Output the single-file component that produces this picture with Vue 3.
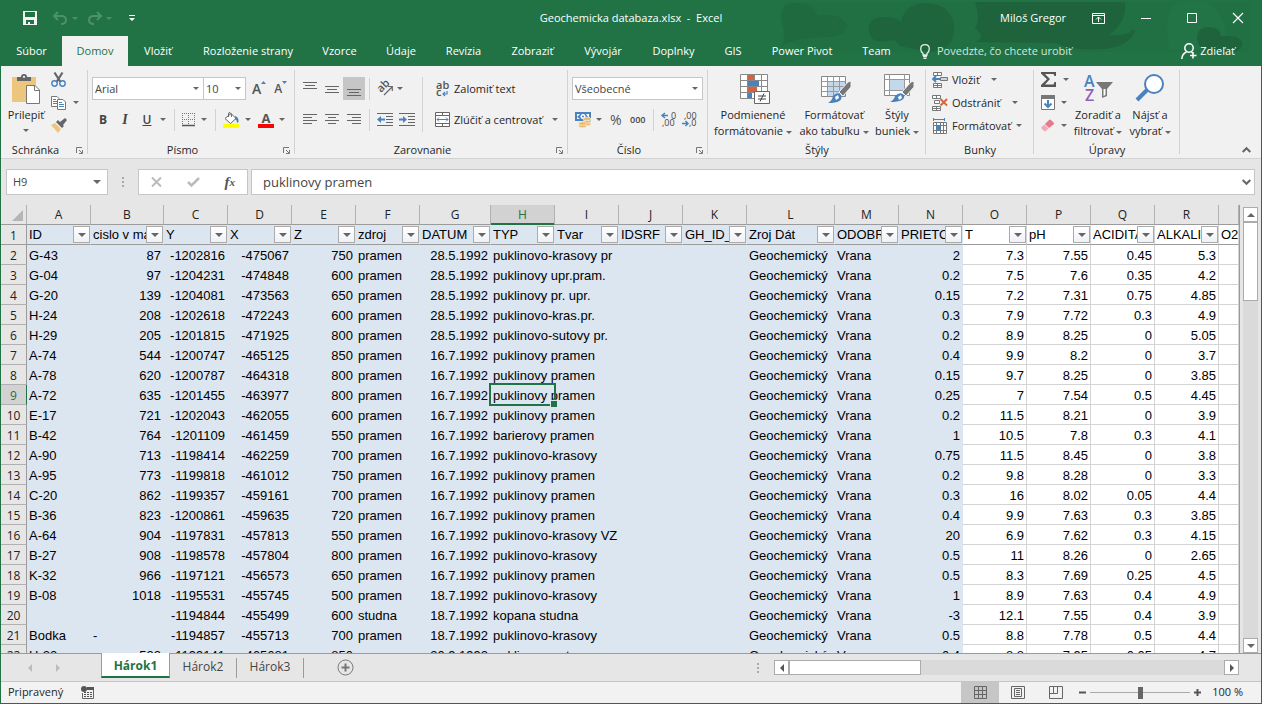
<script setup>
import { ref } from 'vue'

const menuTabs = ['Súbor', 'Domov', 'Vložiť', 'Rozloženie strany', 'Vzorce', 'Údaje', 'Revízia', 'Zobraziť', 'Vývojár', 'Doplnky', 'GIS', 'Power Pivot', 'Team']
const activeTab = ref('Domov')
const formula = ref('puklinovy pramen')
const zoom = ref(50)

const columns = [...'ABCDEFGHIJKLMNOPQR', '']
const headings = ['ID', 'cislo v mape', 'Y', 'X', 'Z', 'zdroj', 'DATUM', 'TYP', 'Tvar', 'IDSRF', 'GH_ID_', 'Zroj Dát', 'ODOBRAL', 'PRIETOK', 'T', 'pH', 'ACIDITA', 'ALKALITA', 'O2']
const source = [
  ['G-43', '87', '-1202816', '-475067', '750', 'pramen', '28.5.1992', 'puklinovo-krasovy pr', '2', '7.3', '7.55', '0.45', '5.3'],
  ['G-04', '97', '-1204231', '-474848', '600', 'pramen', '28.5.1992', 'puklinovy upr.pram.', '0.2', '7.5', '7.6', '0.35', '4.2'],
  ['G-20', '139', '-1204081', '-473563', '650', 'pramen', '28.5.1992', 'puklinovy pr. upr.', '0.15', '7.2', '7.31', '0.75', '4.85'],
  ['H-24', '208', '-1202618', '-472243', '600', 'pramen', '28.5.1992', 'puklinovo-kras.pr.', '0.3', '7.9', '7.72', '0.3', '4.9'],
  ['H-29', '205', '-1201815', '-471925', '800', 'pramen', '28.5.1992', 'puklinovo-sutovy pr.', '0.2', '8.9', '8.25', '0', '5.05'],
  ['A-74', '544', '-1200747', '-465125', '850', 'pramen', '16.7.1992', 'puklinovy pramen', '0.4', '9.9', '8.2', '0', '3.7'],
  ['A-78', '620', '-1200787', '-464318', '800', 'pramen', '16.7.1992', 'puklinovy pramen', '0.15', '9.7', '8.25', '0', '3.85'],
  ['A-72', '635', '-1201455', '-463977', '800', 'pramen', '16.7.1992', 'puklinovy pramen', '0.25', '7', '7.54', '0.5', '4.45'],
  ['E-17', '721', '-1202043', '-462055', '600', 'pramen', '16.7.1992', 'puklinovy pramen', '0.2', '11.5', '8.21', '0', '3.9'],
  ['B-42', '764', '-1201109', '-461459', '550', 'pramen', '16.7.1992', 'barierovy pramen', '1', '10.5', '7.8', '0.3', '4.1'],
  ['A-90', '713', '-1198414', '-462259', '700', 'pramen', '16.7.1992', 'puklinovo-krasovy', '0.75', '11.5', '8.45', '0', '3.8'],
  ['A-95', '773', '-1199818', '-461012', '750', 'pramen', '16.7.1992', 'puklinovy pramen', '0.2', '9.8', '8.28', '0', '3.3'],
  ['C-20', '862', '-1199357', '-459161', '700', 'pramen', '16.7.1992', 'puklinovy pramen', '0.3', '16', '8.02', '0.05', '4.4'],
  ['B-36', '823', '-1200861', '-459635', '720', 'pramen', '16.7.1992', 'puklinovy pramen', '0.4', '9.9', '7.63', '0.3', '3.85'],
  ['A-64', '904', '-1197831', '-457813', '550', 'pramen', '16.7.1992', 'puklinovo-krasovy VZ', '20', '6.9', '7.62', '0.3', '4.15'],
  ['B-27', '908', '-1198578', '-457804', '800', 'pramen', '16.7.1992', 'puklinovo-krasovy', '0.5', '11', '8.26', '0', '2.65'],
  ['K-32', '966', '-1197121', '-456573', '650', 'pramen', '16.7.1992', 'puklinovy pramen', '0.5', '8.3', '7.69', '0.25', '4.5'],
  ['B-08', '1018', '-1195531', '-455745', '500', 'pramen', '18.7.1992', 'puklinovo-krasovy', '1', '8.9', '7.63', '0.4', '4.9'],
  ['', '', '-1194844', '-455499', '600', 'studna', '18.7.1992', 'kopana studna', '-3', '12.1', '7.55', '0.4', '3.9'],
  ['Bodka', '-', '-1194857', '-455713', '700', 'pramen', '18.7.1992', 'puklinovo-krasovy', '0.5', '8.8', '7.78', '0.5', '4.4'],
  ['H-22', '532', '-1199141', '-465681', '850', 'pramen', '20.9.1992', 'puklinovo-sutovy', '0.4', '8.8', '7.95', '0.05', '4.7']
]
const rows = source.map((r) => [...r.slice(0, 8), '', '', '', 'Geochemický', 'Vrana', ...r.slice(8), ''])

const textColumns = [0, 5, 7, 11, 12]
function cellClass(value, c, r) {
  return {
    num: !textColumns.includes(c) && value !== '-',
    plain: c > 13,
    selected: c === 7 && r === 7
  }
}
</script>

<template>
  <div class="window">
    <header class="top">
      <svg class="pattern" width="482" height="56" viewBox="0 0 482 56" aria-hidden="true">
        <g fill="#1e633c">
          <path opacity=".45" d="M5 2H470V52H30Q10 45 8 30Z" fill="#1f6c41" />
          <path opacity=".5" d="M2 20Q0 3 18 3Q36 3 38 16Q62 12 68 26Q66 38 42 37Q14 38 2 47Q8 37 2 20Z" />
          <path opacity=".8" d="M90 32Q88 17 105 17Q118 17 122 22Q126 3 148 3Q176 5 175 32Q172 52 150 52L120 46Q118 38 108 41Q92 44 90 32Z" />
          <path d="M196 2H346Q348 22 330 35Q352 36 352 30H356Q352 46 325 49Q290 51 278 43L196 42Q208 38 196 28Q202 20 196 2Z" />
          <path opacity=".2" fill="#2d8050" d="M388 25Q390 2 404 2H428Q452 20 446 50H390Z" />
          <path d="M418 38Q418 27 431 27Q442 28 442 36Q460 34 463 43Q464 52 448 52H428Q419 48 418 38Z" />
        </g>
      </svg>
      <div class="titlebar">
        <div class="quick">
          <button class="tb" aria-label="Uložiť"><svg width="14" height="14" viewBox="0 0 14 14"><path fill="#f4f4f4" fill-rule="evenodd" d="M0 0H14V14H0ZM2 1V6H12V1ZM3 9V13H5V11H7V13H11V9Z" /></svg></button>
          <button class="tb" aria-label="Späť"><svg width="15" height="13" viewBox="0 0 15 13" fill="none" stroke="#4d916b" stroke-width="2"><path d="M5 0L1 4L5 8M1 4H8Q13 4 13 8Q13 12 8 12" /></svg></button>
          <span class="caret dim"></span>
          <button class="tb redo" aria-label="Znova"><svg width="15" height="13" viewBox="0 0 15 13" fill="none" stroke="#4d916b" stroke-width="2"><path d="M10 0L14 4L10 8M14 4H7Q2 4 2 8Q2 12 7 12" /></svg></button>
          <span class="caret dim"></span>
          <button class="tb more" aria-label="Prispôsobiť"><svg width="6" height="6" viewBox="0 0 6 6" fill="#fff"><path d="M0 0H6V1H0ZM0 3H6L3 6Z" /></svg></button>
        </div>
        <div class="title">Geochemicka databaza.xlsx&nbsp; -&nbsp; Excel</div>
        <div class="system">
          <span>Miloš Gregor</span>
          <button class="tb" aria-label="Zobrazenie pása s nástrojmi"><svg width="13" height="11" viewBox="0 0 13 11" fill="none" stroke="#fff"><path d="M.5.5H12.5V10.5H.5ZM1 2.500H12M6.500 9V4M4 6.500L6.500 4L9 6.500" /></svg></button>
          <button class="tb" aria-label="Minimalizovať"><svg width="10" height="10" viewBox="0 0 10 10" stroke="#fff"><path d="M0 5.500H10" /></svg></button>
          <button class="tb" aria-label="Maximalizovať"><svg width="10" height="10" viewBox="0 0 10 10" stroke="#fff" fill="none"><path d="M.5.5H9.500V9.500H.5Z" /></svg></button>
          <button class="tb" aria-label="Zavrieť"><svg width="10" height="10" viewBox="0 0 10 10" stroke="#fff" stroke-width="1.200"><path d="M0 0L10 10M10 0L0 10" /></svg></button>
        </div>
      </div>
      <div class="menubar">
        <nav class="menu">
          <button v-for="t in menuTabs" :key="t" :class="{ on: t === activeTab }" @click="activeTab = t">{{ t }}</button>
        </nav>
        <button class="tell"><svg width="10" height="15" viewBox="0 0 10 15" fill="none" stroke="#e3efe8" stroke-width="1.300"><path d="M3 11V9.500Q.7 7.500.7 5Q.7.700 5 .7Q9.300.700 9.300 5Q9.300 7.500 7 9.500V11ZM3 12.500H7M3.500 14.300H6.500" /></svg>Povedzte, čo chcete urobiť</button>
        <button class="share"><svg width="16" height="16" viewBox="0 0 16 16" fill="none" stroke="#fff" stroke-width="1.500"><circle cx="8" cy="5" r="4.200" /><path d="M.8 16Q1 11 5.500 9M10.500 9L11.500 10M12 9V15.500M9 12.500H15.500" /></svg>Zdieľať</button>
      </div>
    </header>

    <section class="ribbon">
      <div class="group g-clip">
        <div class="body">
          <button class="big paste">
            <svg width="28" height="30" viewBox="0 0 28 30"><path fill="#ecc57e" d="M0 3H24V28H0Z" /><path fill="#666" fill-rule="evenodd" d="M5 7V3H9Q9 0 12 0Q15 0 15 3H19V7ZM11 2V4H13V2Z" /><path fill="#fff" stroke="#777" d="M14.500 11.500H23L27.500 16V29.500H14.500Z" /><path fill="none" stroke="#777" d="M22.500 11.500V16.500H27.500" /></svg>
            <span>Prilepiť</span><i class="caret"></i>
          </button>
          <div class="stack clipstack">
            <button aria-label="Vystrihnúť"><svg width="15" height="15" viewBox="0 0 15 15" fill="none"><path stroke="#666" stroke-width="2.200" d="M3.500.5L9.500 10M11.500.5L5.500 10" /><circle cx="3.500" cy="11.500" r="2.700" stroke="#4a82bd" stroke-width="1.400" /><circle cx="11.500" cy="11.500" r="2.700" stroke="#4a82bd" stroke-width="1.400" /></svg></button>
            <button aria-label="Kopírovať"><svg width="15" height="14" viewBox="0 0 15 14"><path fill="#fff" stroke="#777" d="M.5.500H6L8.500 3V10.500H.5Z" /><path stroke="#4a82bd" d="M2 3.500H5M2 5.500H6M2 7.500H6" /><path fill="#fff" stroke="#777" d="M6.500 3.500H12L14.500 6V13.500H6.500Z" /><path stroke="#4a82bd" d="M8 6.500H11M8 8.500H13M8 10.500H13" /></svg><i class="caret"></i></button>
            <button aria-label="Kopírovať formát"><svg width="16" height="15" viewBox="0 0 16 15"><path fill="#ecc57e" d="M0 7L4 5L10 11L7 15Z" /><path fill="#666" d="M5 4L7 2L13 8L11 10ZM9 4L14 0L16 2L12 7Z" /></svg></button>
          </div>
        </div>
        <div class="glabel">Schránka<svg class="launch" width="7" height="7" viewBox="0 0 7 7"><path fill="none" stroke="#777" d="M.5 6V.5H6M3 3L6 6M6.500 3V6.500H3" /></svg></div>
      </div>

      <div class="group g-font">
        <div class="body rows">
          <div class="row">
            <label class="combo font"><select aria-label="Písmo"><option>Arial</option></select><i class="caret"></i></label>
            <label class="combo size"><select aria-label="Veľkosť písma"><option>10</option></select><i class="caret"></i></label>
            <button class="grow" aria-label="Zväčšiť písmo"><b>A</b><svg width="5" height="3" viewBox="0 0 5 3"><path fill="#4a82bd" d="M0 3L2.500 0L5 3Z" /></svg></button>
            <button class="grow small" aria-label="Zmenšiť písmo"><b>A</b><svg width="5" height="3" viewBox="0 0 5 3"><path fill="#4a82bd" d="M0 0H5L2.500 3Z" /></svg></button>
          </div>
          <div class="row biu">
            <button class="fmt"><b>B</b></button>
            <button class="fmt"><em>I</em></button>
            <button class="fmt"><u>U</u></button><i class="caret"></i>
            <span class="vsep"></span>
            <button aria-label="Orámovanie"><svg width="14" height="14" viewBox="0 0 14 14" fill="none" stroke="#777"><path stroke-dasharray="1 1" d="M0 .5H13M.5 0V12M12.500 0V12M6.500 0V12M0 6.500H13" /><path d="M0 12.500H13" stroke="#555" stroke-width="1.500" /></svg></button><i class="caret"></i>
            <span class="vsep"></span>
            <button aria-label="Farba výplne"><svg width="17" height="16" viewBox="0 0 17 16"><path fill="#fff" stroke="#666" d="M2 6.500L8 1.500L13 6.500L7.500 11.500Z" /><path fill="none" stroke="#666" d="M5.500 5V2Q5.500.5 7 .5Q8.500.5 8.500 5" /><path fill="#4a82bd" d="M12 4Q16 5 15.500 10L14 11Q14 8 12 7Z" /><path fill="#ff0" d="M0 12H16V16H0Z" /></svg></button><i class="caret"></i>
            <button class="color"><b>A</b></button><i class="caret"></i>
          </div>
        </div>
        <div class="glabel">Písmo<svg class="launch" width="7" height="7" viewBox="0 0 7 7"><path fill="none" stroke="#777" d="M.5 6V.5H6M3 3L6 6M6.500 3V6.500H3" /></svg></div>
      </div>

      <div class="group g-align">
        <div class="body alignbody">
          <div class="alignleft">
            <div class="row">
              <button class="al" aria-label="Hore"><svg width="14" height="14" viewBox="0 0 14 14" stroke="#666"><path d="M0 .5H14M2 3.500H12M0 6.500H14" /></svg></button>
              <button class="al" aria-label="Stred"><svg width="14" height="14" viewBox="0 0 14 14" stroke="#666"><path d="M0 4.500H14M2 7.500H12M0 10.500H14" /></svg></button>
              <button class="al pressed" aria-label="Dole"><svg width="14" height="14" viewBox="0 0 14 14" stroke="#666"><path d="M0 7.500H14M2 10.500H12M0 13.500H14" /></svg></button>
              <span class="vsep"></span>
              <button class="orient" aria-label="Orientácia"><svg width="16" height="16" viewBox="0 0 16 16"><text transform="translate(4 12) rotate(-45)" font-size="11" font-family="Open Sans" font-weight="600" fill="#555">ab</text><path fill="none" stroke="#666" stroke-width="1.200" d="M7 14L15 6M11 5.500H15.300V10" /></svg><i class="caret"></i></button>
            </div>
            <div class="row">
              <button class="al" aria-label="Vľavo"><svg width="14" height="11" viewBox="0 0 14 11" stroke="#666"><path d="M0 .5H14M0 3.500H9M0 6.500H14M0 9.500H9" /></svg></button>
              <button class="al" aria-label="Centrovať"><svg width="14" height="11" viewBox="0 0 14 11" stroke="#666"><path d="M0 .5H14M3 3.500H11M0 6.500H14M3 9.500H11" /></svg></button>
              <button class="al" aria-label="Vpravo"><svg width="14" height="11" viewBox="0 0 14 11" stroke="#666"><path d="M0 .5H14M5 3.500H14M0 6.500H14M5 9.500H14" /></svg></button>
              <span class="vsep"></span>
              <button class="al" aria-label="Zmenšiť zarážku"><svg width="16" height="13" viewBox="0 0 16 13"><path stroke="#666" d="M0 .5H16M9 3.500H16M9 6.500H16M9 9.500H16M0 12.500H16" /><path fill="#4a82bd" d="M0 6.500L4 3V5.500H8V7.500H4V10Z" /></svg></button>
              <button class="al" aria-label="Zväčšiť zarážku"><svg width="16" height="13" viewBox="0 0 16 13"><path stroke="#666" d="M0 .5H16M9 3.500H16M9 6.500H16M9 9.500H16M0 12.500H16" /><path fill="#4a82bd" d="M8 6.500L4 3V5.500H0V7.500H4V10Z" /></svg></button>
            </div>
          </div>
          <span class="vsep long"></span>
          <div class="alignright">
            <button class="txt"><svg width="15" height="16" viewBox="0 0 15 16"><text x="1" y="8" font-size="11" font-family="Open Sans" font-weight="600" fill="#555">ab</text><text x="1" y="15" font-size="11" font-family="Open Sans" font-weight="600" fill="#555">c</text><path fill="none" stroke="#4a82bd" stroke-width="1.200" d="M12 10V13H8M10 11L8 13L10 15" /></svg>Zalomiť text</button>
            <button class="txt"><svg width="15" height="15" viewBox="0 0 15 15"><path fill="#fff" stroke="#666" d="M.5.5H14.500V14.500H.5ZM.5 3.500H14.500M.5 11.500H14.500M7.500.500V3.500M7.500 11.500V14.500" /><path fill="none" stroke="#4a82bd" d="M2 7.500H13M4 5.500L2 7.500L4 9.500M11 5.500L13 7.500L11 9.500" /></svg>Zlúčiť a centrovať<i class="caret"></i></button>
          </div>
        </div>
        <div class="glabel">Zarovnanie<svg class="launch" width="7" height="7" viewBox="0 0 7 7"><path fill="none" stroke="#777" d="M.5 6V.5H6M3 3L6 6M6.500 3V6.500H3" /></svg></div>
      </div>

      <div class="group g-num">
        <div class="body rows">
          <div class="row"><label class="combo numfmt"><select aria-label="Formát čísla"><option>Všeobecné</option></select><i class="caret"></i></label></div>
          <div class="row numrow">
            <button aria-label="Mena"><svg width="17" height="16" viewBox="0 0 17 16"><path fill="#4a82bd" d="M0 0H16V9H0Z" /><path fill="#fff" d="M2 2H5L2 5ZM14 2V6L11 2ZM2 7V5L5 7Z" /><circle cx="8" cy="4.500" r="2.500" fill="#fff" /><circle cx="8" cy="4.500" r="1" fill="#4a82bd" /><g fill="#ecb96a" stroke="#f1f1f1" stroke-width=".7"><ellipse cx="12" cy="12" rx="4" ry="1.800" /><ellipse cx="12" cy="9.500" rx="4" ry="1.800" /><ellipse cx="12" cy="7" rx="4" ry="1.800" /><ellipse cx="7.500" cy="14" rx="4" ry="1.800" /><ellipse cx="7.500" cy="11.500" rx="4" ry="1.800" /></g></svg></button><i class="caret"></i>
            <button class="pct">%</button>
            <button class="zeros">000</button>
            <span class="vsep"></span>
            <button aria-label="Pridať desatinné miesto"><svg width="15" height="15" viewBox="0 0 15 15"><text x="10" y="7" font-size="9" font-family="Open Sans" fill="#444">0</text><text x="1" y="14" font-size="9" font-family="Open Sans" fill="#444">,00</text><path fill="none" stroke="#4a82bd" stroke-width="1.500" d="M1 3.500H7M4 1L1 3.500L4 6" /></svg></button>
            <button aria-label="Odobrať desatinné miesto"><svg width="15" height="15" viewBox="0 0 15 15"><text x="2" y="7" font-size="9" font-family="Open Sans" fill="#444">,00</text><text x="7" y="14" font-size="9" font-family="Open Sans" fill="#444">,0</text><path fill="none" stroke="#4a82bd" stroke-width="1.500" d="M0 11.500H6M3.500 9L6 11.500L3.500 14" /></svg></button>
          </div>
        </div>
        <div class="glabel">Číslo<svg class="launch" width="7" height="7" viewBox="0 0 7 7"><path fill="none" stroke="#777" d="M.5 6V.5H6M3 3L6 6M6.500 3V6.500H3" /></svg></div>
      </div>

      <div class="group g-style">
        <div class="body">
          <button class="big cond">
            <svg width="30" height="30" viewBox="0 0 30 30"><path fill="#fff" stroke="#888" d="M.5.500H27.500V24.500H.5ZM.5 6.500H27.500M.5 12.500H27.500M.5 18.500H27.500M7.500.500V24.500M14.500.500V24.500M21.500.500V24.500" /><path fill="#d8623e" d="M8 1H14V6H8ZM8 13H17V18H8Z" /><path fill="#4a82bd" d="M8 7H19V12H8ZM8 19H12V24H8Z" /><path fill="#fff" stroke="#666" d="M14.500 17.500H29.500V29.500H14.500Z" /><path fill="none" stroke="#444" d="M18 22H26M18 25H26M24 19.500L20 27.500" /></svg>
            <span>Podmienené</span><span>formátovanie <i class="caret"></i></span>
          </button>
          <button class="big tab">
            <svg width="30" height="30" viewBox="0 0 30 30"><path fill="#fff" stroke="#888" d="M.5 2.500H24.500V22.500H.5Z" /><path fill="#c4d8ec" d="M7 8H24V22H7Z" /><path fill="none" stroke="#999" d="M.5 7.500H24.500M.5 12.500H24.500M.5 17.500H24.500M6.500 2.500V22.500M12.500 2.500V22.500M18.500 2.500V22.500" /><path fill="#777" stroke="#f1f1f1" d="M30 7V13L22 22L18 18L27 8Z" /><path fill="#4a82bd" d="M7 29Q11 27 12 22Q16 17 20 21Q23 29 7 29Z" /><path fill="#fff" d="M14 23L17 21L18 24L15 26Z" /></svg>
            <span>Formátovať</span><span>ako tabuľku <i class="caret"></i></span>
          </button>
          <button class="big cell">
            <svg width="30" height="30" viewBox="0 0 30 30"><path fill="#fff" stroke="#888" d="M.5.500H25.500V21.500H.5Z" /><path fill="#c4d8ec" d="M6 6H20V16H6Z" /><path fill="none" stroke="#999" d="M.5 5.500H25.500M.5 16.500H25.500M5.500.500V21.500M20.500.500V21.500" /><path fill="#777" stroke="#f1f1f1" d="M30 7V13L22 22L18 18L27 8Z" /><path fill="#4a82bd" d="M6 28Q10 26 11 22Q16 17 20 21Q22 28 6 28Z" /><path fill="#fff" d="M14 23L17 21L18 24L15 26Z" /></svg>
            <span>Štýly</span><span>buniek <i class="caret"></i></span>
          </button>
        </div>
        <div class="glabel">Štýly</div>
      </div>

      <div class="group g-cells">
        <div class="body stack cellstack">
          <button><svg width="16" height="16" viewBox="0 0 16 16"><path fill="#fff" stroke="#777" d="M1.500.500H9.500V3.500H1.500ZM5.500.500V3.500M1.500 11.500H9.500V15.500H1.500ZM5.500 11.500V15.500M1.500 13.500H9.500" /><path fill="#c4d8ec" stroke="#777" d="M8.500 5.500H15.500V8.500H8.500Z" /><path fill="none" stroke="#4a82bd" stroke-width="1.800" d="M1 7H8M4 4L1 7L4 10" /></svg>Vložiť<i class="caret far"></i></button>
          <button><svg width="16" height="16" viewBox="0 0 16 16"><path fill="#fff" stroke="#777" d="M.5.500H8.500V3.500H.5ZM4.500.500V3.500M2.500 5.500H7.500V8.500H2.500ZM.5 11.500H8.500V15.500H.5ZM4.500 11.500V15.500M.5 13.500H8.500" /><path fill="none" stroke="#d8623e" stroke-width="1.800" d="M8.500 4L15 10.500M15 4L8.500 10.500" /></svg>Odstrániť<i class="caret far"></i></button>
          <button><svg width="16" height="16" viewBox="0 0 16 16"><path fill="none" stroke="#4a82bd" d="M1 1.500H13M1.500 0V3M12.500 0V3" /><path fill="#fff" stroke="#777" d="M1.500 4.500H14.500V15.500H1.500ZM1.500 7.500H14.500M1.500 12.500H14.500M4.500 4.500V15.500M11.500 4.500V15.500M8.500 4.500V15.500" /><path fill="#4a82bd" d="M4 7H9V12H4Z" /></svg>Formátovať<i class="caret"></i></button>
        </div>
        <div class="glabel">Bunky</div>
      </div>

      <div class="group g-edit">
        <div class="body">
          <div class="stack editstack">
            <button aria-label="Súčet"><svg width="16" height="15" viewBox="0 0 16 15"><path fill="#555" d="M0 0H15V4H13.500L12.500 2H4L9 7L4 12.500H12.500L13.500 10H15V15H0V13L6 7.300L0 1.500Z" /></svg><i class="caret"></i></button>
            <button aria-label="Výplň"><svg width="14" height="15" viewBox="0 0 14 15"><path fill="#fff" stroke="#777" d="M.5.500H13.500V14.500H.5Z" /><path fill="#777" d="M0 0H14V4H0Z" /><path fill="none" stroke="#4a82bd" stroke-width="2" d="M7 5V12M3.500 8.500L7 12L10.500 8.500" /></svg><i class="caret"></i></button>
            <button aria-label="Vymazať"><svg width="14" height="13" viewBox="0 0 14 13"><path fill="#e8788c" d="M8 1Q9 0 10 1L13 4Q13 5 12.500 5.500L8 9L4 5Z" /><path fill="#f0a9b5" d="M3.500 5.500L7.500 9.500L5 12Q4 12.500 3 12L.500 9.500Q0 9 .500 8Z" /></svg><i class="caret"></i></button>
          </div>
          <button class="big sort">
            <svg width="29" height="30" viewBox="0 0 29 30"><text x="0" y="13" font-size="16" font-family="Open Sans" font-weight="600" fill="#4a82bd">A</text><text x="1" y="27" font-size="16" font-family="Open Sans" font-weight="600" fill="#9460b5">Z</text><path fill="#777" d="M12 8H29L23 15V22L18 24V15Z" /><path fill="#fff" d="M19.500 15H21.500V21L19.500 22Z" /></svg>
            <span>Zoradiť a</span><span>filtrovať <i class="caret"></i></span>
          </button>
          <button class="big find">
            <svg width="28" height="30" viewBox="0 0 28 30"><path stroke="#4a82bd" stroke-width="4" d="M1 26L11 16" /><circle cx="18" cy="10" r="9" fill="#fff" stroke="#4a82bd" stroke-width="2" /></svg>
            <span>Nájsť a</span><span>vybrať <i class="caret"></i></span>
          </button>
        </div>
        <div class="glabel">Úpravy</div>
      </div>
      <button class="collapse" aria-label="Zbaliť pás"><svg width="9" height="6" viewBox="0 0 9 6" fill="none" stroke="#666" stroke-width="2"><path d="M.7 5L4.500 1.200L8.300 5" /></svg></button>
    </section>

    <section class="fbar">
      <label class="namebox"><input value="H9" aria-label="Pole názvov" /><i class="caret wide"></i></label>
      <span class="dots"></span>
      <div class="fx">
        <button aria-label="Zrušiť"><svg width="11" height="10" viewBox="0 0 11 10" stroke="#bbb" stroke-width="2"><path d="M1 .5L10 9.500M10 .5L1 9.500" /></svg></button>
        <button aria-label="Zadať"><svg width="13" height="10" viewBox="0 0 13 10" fill="none" stroke="#bbb" stroke-width="2.500"><path d="M1 5L4.500 8.500L12 1" /></svg></button>
        <button class="fn">f<small>x</small></button>
      </div>
      <label class="formula"><input v-model="formula" aria-label="Riadok vzorcov" /><svg width="9" height="6" viewBox="0 0 9 6" fill="none" stroke="#666" stroke-width="2"><path d="M.7 1L4.500 4.800L8.300 1" /></svg></label>
    </section>

    <main class="work">
      <div class="sheet">
        <table>
          <colgroup><col class="ch" /><col v-for="c in columns" :key="c" :class="'c' + c" /></colgroup>
          <thead>
            <tr>
              <th class="corner"><svg width="11" height="11" viewBox="0 0 11 11"><path fill="#b5b5b5" d="M11 0V11H0Z" /></svg></th>
              <th v-for="c in columns" :key="c" scope="col" :class="{ cur: c === 'H' }">{{ c }}</th>
            </tr>
          </thead>
          <tbody>
            <tr class="heads">
              <th scope="row">1</th>
              <td v-for="(h, c) in headings" :key="h" :class="{ plain: c > 13 }">
                <div class="filter"><span>{{ h }}</span><button v-if="c < 18" :aria-label="'Filter ' + h"><i class="caret wide"></i></button></div>
              </td>
            </tr>
            <tr v-for="(row, r) in rows" :key="r">
              <th scope="row" :class="{ cur: r === 7 }">{{ r + 2 }}</th>
              <td v-for="(v, c) in row" :key="c" :class="cellClass(v, c, r)">{{ v }}</td>
            </tr>
          </tbody>
        </table>
      </div>
      <div class="vscroll">
        <button aria-label="Nahor"><i class="caret up"></i></button>
        <span class="vthumb"></span>
        <button class="end" aria-label="Nadol"><i class="caret wide"></i></button>
      </div>
    </main>

    <div class="tabsbar">
      <div class="tabnav"><i class="tri left"></i><i class="tri right"></i></div>
      <button class="stab on">Hárok1</button>
      <button class="stab">Hárok2</button>
      <button class="stab">Hárok3</button>
      <button class="plus" aria-label="Nový hárok"><svg width="17" height="17" viewBox="0 0 17 17" fill="none" stroke="#777"><circle cx="8.500" cy="8.500" r="7.500" /><path stroke-width="2" d="M4.500 8.500H12.500M8.500 4.500V12.500" /></svg></button>
      <span class="dots"></span>
      <div class="hscroll">
        <button aria-label="Doľava"><i class="tri left dark"></i></button>
        <span class="hthumb"></span>
        <button class="end" aria-label="Doprava"><i class="tri right dark"></i></button>
      </div>
    </div>

    <footer class="status">
      <span>Pripravený</span>
      <svg class="macro" width="13" height="13" viewBox="0 0 13 13"><path fill="#555" d="M6 1H13V4H6Z" /><path fill="none" stroke="#666" d="M1.500 7V12.500H12.500V4" /><path stroke="#555" stroke-dasharray="2 1" d="M3 6.500H12M3 8.500H12M3 10.500H12" /><circle cx="3" cy="3" r="3" fill="#555" /></svg>
      <div class="views">
        <button class="on" aria-label="Normálne"><svg width="13" height="13" viewBox="0 0 13 13" fill="none" stroke="#666"><path d="M.5.500H12.500V12.500H.5ZM.5 4.500H12.500M.5 8.500H12.500M4.500.500V12.500M8.500.500V12.500" /></svg></button>
        <button aria-label="Rozloženie strany"><svg width="14" height="13" viewBox="0 0 14 13" fill="none" stroke="#666"><path d="M.5.500H13.500V12.500H.5ZM3.500 2.500H10.500V10.500H3.500ZM5 4.500H9M5 6.500H9M5 8.500H9" /></svg></button>
        <button aria-label="Zlomy strán"><svg width="14" height="13" viewBox="0 0 14 13" fill="none" stroke="#666"><path d="M.5.500H13.500V12.500H.5ZM.5 7.500H8.500V.5M4.500.500V7.500" /></svg></button>
      </div>
      <button class="zb" aria-label="Oddialiť"><svg width="7" height="7" viewBox="0 0 7 7" stroke="#555" stroke-width="2"><path d="M0 3.500H7" /></svg></button>
      <input v-model="zoom" class="zoom" type="range" aria-label="Lupa" />
      <button class="zb" aria-label="Priblížiť"><svg width="7" height="7" viewBox="0 0 7 7" stroke="#555" stroke-width="2"><path d="M0 3.500H7M3.500 0V7" /></svg></button>
      <span class="pc">100 %</span>
    </footer>
  </div>
</template>

<style>
body { background: #e6e6e6; }
</style>

<style scoped>
* { box-sizing: border-box; }
.window { display: flex; flex-direction: column; height: 100vh; border: solid #217346; border-width: 0 1px 1px; overflow: hidden; background: #e6e6e6; color: #262626; font: 11px/16px "Open Sans", "Noto Sans", sans-serif; }
button { display: flex; align-items: center; padding: 0; border: 0; background: none; color: inherit; font: inherit; white-space: nowrap; }
input, select { min-width: 0; margin: 0; padding: 0; border: 0; outline: 0; background: none; color: #444; font: inherit; appearance: none; }
svg { display: block; flex: none; overflow: visible; }
.caret { display: inline-block; flex: none; border: solid transparent; border-width: 3px 3px 0; border-top-color: #666; vertical-align: middle; }
.caret.wide { border-width: 4px 4px 0; border-top-color: #666; }
.caret.dim { border-top-color: #4d916b; }
.caret.up { border-width: 0 4px 4px; border-bottom-color: #666; }

.top { position: relative; flex: none; background: #217346; color: #fff; }
.pattern { position: absolute; top: 0; right: 0; }
.titlebar { position: relative; display: grid; grid-template-columns: 1fr auto 1fr; align-items: center; height: 36px; }
.quick { display: flex; align-items: center; padding-left: 22px; }
.quick .tb { margin-right: 16px; }
.quick .tb + .caret { margin-left: -12px; }
.quick .caret { margin-right: 9px; }
.quick .more { margin-left: 8px; }
.system { display: flex; align-items: center; justify-content: flex-end; padding-right: 18px; }
.system .tb { margin-left: 36px; }
.system span + .tb { margin-left: 26px; }
.menubar { position: relative; display: flex; align-items: center; height: 30px; }
.menu { display: grid; grid-template-columns: 61px 66px 60px 120px 63px 60px 65px 73px 68px 73px 46px 92px 57px; align-self: stretch; }
.menu button { justify-content: center; }
.menu .on { background: #f1f1f1; color: #217346; }
.tell { gap: 7px; margin-left: 15px; color: #d3e6da; }
.share { gap: 3px; margin-left: auto; padding-right: 26px; }

.ribbon { display: flex; flex: none; height: 93px; border-bottom: 1px solid #d2d2d2; background: #f1f1f1; }
.group { display: flex; flex-direction: column; flex: none; position: relative; padding-top: 2px; }
.group::after { content: ""; position: absolute; right: 0; top: 4px; bottom: 4px; width: 1px; background: #d2d2d2; }
.g-clip { width: 87px; }
.g-font { width: 207px; }
.g-align { width: 273px; }
.g-num { width: 140px; }
.g-style { width: 218px; }
.g-cells { width: 108px; }
.g-edit { width: 146px; }
.body { display: flex; flex: 1; }
.glabel { display: flex; align-items: center; justify-content: center; height: 16px; padding-right: 18px; }
.g-style .glabel, .g-cells .glabel, .g-edit .glabel { padding-right: 0; }
.launch { position: absolute; right: 5px; bottom: 4px; }
.big { flex-direction: column; align-items: center; padding-top: 6px; }
.big svg { margin-bottom: 3px; }
.paste { width: 50px; }
.paste .caret { margin-top: 6px; }
.stack { display: flex; flex-direction: column; }
.stack button { height: 23px; }
.clipstack button { gap: 7px; }
.rows { flex-direction: column; gap: 8px; padding: 9px 4px 0; }
.row { display: flex; align-items: center; height: 23px; }
.combo { display: flex; align-items: center; flex: none; height: 23px; padding: 0 4px 0 2px; border: 1px solid #c6c6c6; background: #fff; }
.combo select { flex: 1; }
.combo.font { width: 112px; }
.combo.size { width: 43px; margin-left: -1px; }
.combo.numfmt { width: 131px; }
.grow { align-items: flex-start; margin-left: 6px; color: #555; }
.grow b { font-size: 14px; font-weight: 600; }
.grow.small { margin-left: 8px; }
.grow.small b { font-size: 12px; }
.biu .caret { margin-left: 5px; }
.fmt { justify-content: center; flex: none; width: 22px; color: #444; font-size: 12px; }
.fmt em { font-family: "Liberation Serif", serif; font-weight: bold; font-size: 14px; }
.fmt u { font-weight: 600; }
.biu .fmt + .caret { margin-left: 2px; }
.vsep { flex: none; width: 1px; height: 22px; margin: 0 7px; background: #d2d2d2; }
.biu .vsep { margin: 0 7px 0 8px; }
.color { justify-content: center; width: 16px; height: 16px; margin-left: 7px; border-bottom: 4px solid #f00; color: #555; font-size: 13px; }

.alignbody { padding: 9px 0 0 4px; }
.alignleft, .alignright { display: flex; flex-direction: column; gap: 8px; }
.al { justify-content: center; width: 22px; height: 23px; }
.pressed { background: #c6c6c6; }
.alignleft .vsep { margin: 0 4px; }
.orient { gap: 4px; padding-left: 3px; }
.vsep.long { height: 55px; margin: 0 12px 0 4px; }
.alignright .txt { gap: 4px; height: 23px; }
.alignright .caret { margin-left: 6px; }
.numrow { padding-left: 3px; }
.numrow .caret { margin: 0 8px 0 4px; }
.pct { width: 20px; color: #555; font-size: 14px; }
.zeros { color: #444; font-size: 9px; font-weight: 600; }
.numrow .vsep { margin: 0 7px 0 8px; }
.numrow .vsep + button { margin-right: 6px; }

.g-style .big svg { margin-left: 3px; }
.g-style .cond { width: 90px; }
.g-style .tab { width: 72px; }
.g-style .cell { width: 54px; }
.cellstack { padding: 0 0 0 6px; }
.cellstack button { gap: 4px; }
.cellstack .caret { margin-left: 1px; }
.cellstack .caret.far { margin-left: 7px; }
.editstack { width: 37px; padding-left: 7px; }
.editstack button { gap: 6px; }
.sort { width: 54px; }
.find { width: 50px; }
.collapse { align-self: flex-end; margin: 0 10px 5px auto; }

.fbar { display: flex; align-items: center; flex: none; height: 46px; padding: 0 6px 0 5px; }
.namebox, .fx, .formula { display: flex; align-items: center; height: 26px; border: 1px solid #c6c6c6; background: #fff; }
.namebox { width: 102px; padding: 0 6px; }
.namebox input { flex: 1; }
.dots { flex: none; width: 2px; height: 10px; margin: 0 14px; background: repeating-linear-gradient(#aaa 0 2px, transparent 2px 4px); }
.fx { justify-content: space-between; width: 110px; padding: 0 12px; }
.fn { color: #555; font: italic bold 15px/16px "Liberation Serif", serif; }
.fn small { font-size: 11px; }
.formula { flex: 1; margin-left: 3px; padding: 0 3px 0 11px; }
.formula input { flex: 1; font-size: 13px; }

.work { display: flex; flex: 1; min-height: 0; }
.sheet { flex: 1; min-width: 0; overflow: hidden; border-right: 1px solid #9b9b9b; }
table { width: 100%; border-spacing: 0; table-layout: fixed; color: #000; font: 13px/17px "Liberation Sans", Arial, sans-serif; white-space: nowrap; }
col { width: 64px; }
.ch { width: 26px; }
.cB { width: 73px; }
.cG { width: 71px; }
.cL { width: 88px; }
.c { width: auto; }
th { height: 20px; padding: 2px 0 0; border: solid #b1b1b1; border-width: 0 1px 1px 0; background: #e6e6e6; font: 12px/17px "Open Sans", sans-serif; color: #222; }
thead th { padding: 0; border-bottom-color: #9b9b9b; line-height: 19px; }
tbody th { border-right-color: #9b9b9b; }
th.cur { background: #d2d2d2; color: #217346; }
thead th.cur { box-shadow: inset 0 -1px #217346; border-bottom-color: #217346; }
tbody th.cur { border-right-color: #217346; }
.corner svg { margin: 2px 0 0 11px; }
td { height: 20px; padding: 2px 2px 0; border: solid #dce6f1; border-width: 0 1px 1px 0; background: #dce6f1; text-align: left; }
td.num { text-align: right; }
td.plain { border-color: #d4d4d4; background: #fff; }
.heads td, .heads th { border-bottom-color: #9b9b9b; }
.heads td { padding: 0 0 0 2px; }
.filter { display: flex; align-items: center; height: 19px; }
.filter span { flex: 1; min-width: 0; overflow: hidden; }
.filter button { justify-content: center; flex: none; width: 17px; height: 17px; border: 1px solid #ababab; background: linear-gradient(#fff, #eef1f6); }
td.selected { position: relative; }
td.selected::after { content: ""; position: absolute; inset: -2px; border: 2px solid #217346; }
td.selected::before { content: ""; position: absolute; z-index: 1; right: -3px; bottom: -3px; width: 6px; height: 6px; border: solid #dce6f1; border-width: 1px 0 0 1px; background: #217346; }
.vscroll { display: flex; flex-direction: column; width: 15px; margin: 2px 3px 0; background: #dadada; }
.vscroll button, .hscroll button { justify-content: center; flex: none; width: 15px; height: 15px; border: 1px solid #ababab; background: #fff; }
.vthumb { height: 79px; border: 1px solid #ababab; background: #fff; }
.vscroll .end { margin-top: auto; }

.tabsbar { display: flex; align-items: center; flex: none; height: 29px; padding-right: 22px; border-top: 1px solid #9b9b9b; border-bottom: 1px solid #c6c6c6; }
.tabnav { display: flex; gap: 24px; width: 100px; padding-left: 27px; }
.tri { border: 4px solid transparent; }
.tri.left { border-width: 4px 4px 4px 0; border-right-color: #bbb; }
.tri.right { border-width: 4px 0 4px 4px; border-left-color: #bbb; }
.tri.left.dark { border-right-color: #555; }
.tri.right.dark { border-left-color: #555; }
.stab { justify-content: center; width: 67px; height: 20px; padding-bottom: 1px; border-right: 1px solid #9b9b9b; color: #444; font-size: 12px; }
.stab.on { align-self: flex-start; width: 69px; height: 25px; margin-top: -1px; padding: 2px 0 0; border: solid #9b9b9b; border-width: 0 1px 2px; border-bottom-color: #217346; background: #fff; color: #217346; font-weight: bold; }
.plus { margin: 0 auto 0 33px; }
.tabsbar .dots { margin-right: 15px; }
.hscroll { display: flex; flex: 0 1 465px; background: #dadada; }
.hthumb { width: 132px; border: 1px solid #ababab; background: #fff; }
.hscroll .end { margin-left: auto; }

.status { display: flex; align-items: center; flex: none; height: 21px; padding: 0 18px 0 7px; background: #f2f2f2; }
.status span { margin-bottom: 2px; }
.macro { margin: 0 0 1px 18px; }
.views { display: flex; align-self: stretch; margin-left: auto; }
.views button { justify-content: center; width: 38px; }
.views .on { background: #c6c6c6; }
.zb { margin: 0 4px; }
.zoom { width: 100px; height: 12px; }
.zoom::-webkit-slider-runnable-track { height: 12px; background: linear-gradient(#aaa, #aaa) center / 100% 1px no-repeat; }
.zoom::-webkit-slider-thumb { width: 5px; height: 12px; background: #666; appearance: none; }
.pc { margin-left: 7px; }
</style>
